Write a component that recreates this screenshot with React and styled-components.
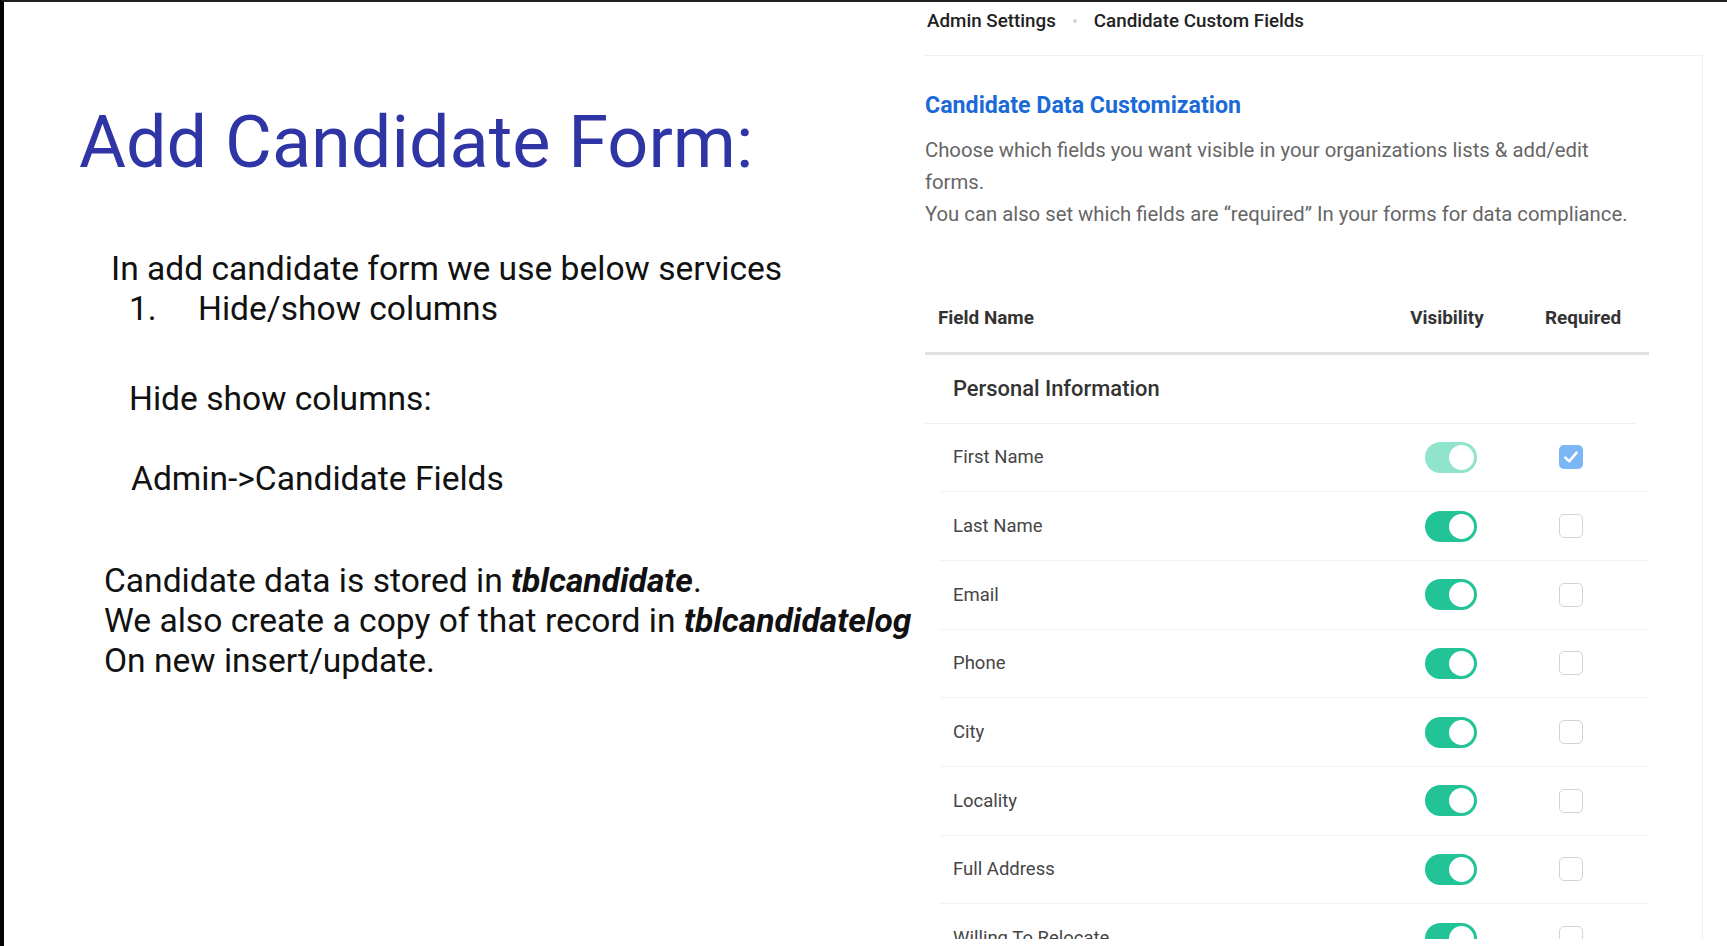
import React from "react";
import styled, { createGlobalStyle } from "styled-components";

const GlobalStyle = createGlobalStyle`
  html, body {
    margin: 0;
    padding: 0;
    background: #fff;
  }
  body {
    font-family: Roboto, "Liberation Sans", sans-serif;
    overflow: hidden;
  }
  * {
    box-sizing: border-box;
  }
`;

const Page = styled.div`
  display: flex;
  width: 1727px;
  height: 946px;
  border-top: 2px solid #1f1f1f;
  border-left: 4px solid #050505;
  background: #fff;
  overflow: hidden;
`;

// left half: the slide text
const Slide = styled.section`
  width: 920px;
  flex-shrink: 0;
  padding-top: 105px;
`;

const Title = styled.h1`
  margin: 0 0 0 75px;
  font-size: 72px;
  font-weight: 400;
  line-height: 1;
  color: #2f35a5;
  white-space: nowrap;
`;

const Line = styled.p`
  margin: ${(p) => p.$top}px 0 0 ${(p) => p.$indent}px;
  font-size: 33.6px;
  line-height: 40px;
  color: #111;
  white-space: nowrap;
`;

const ListItem = styled.div`
  display: flex;
  margin-left: 125px;
  font-size: 33.6px;
  line-height: 40px;
  color: #111;
`;

const Num = styled.span`
  width: 69px;
`;

const Table = styled.b`
  font-weight: 700;
  font-style: italic;
`;

// right half: the app screenshot
const Panel = styled.section`
  flex: 1;
  min-width: 0;
  display: flex;
  flex-direction: column;
  padding-bottom: 7px;
`;

const Breadcrumb = styled.nav`
  display: flex;
  align-items: center;
  gap: 17px;
  padding: 7px 0 0 3px;
  font-size: 18.8px;
  font-weight: 500;
  line-height: 24px;
  color: #222;
`;

const Dot = styled.span`
  width: 4px;
  height: 4px;
  border-radius: 50%;
  background: #d2d2d2;
`;

const Card = styled.div`
  flex: 1;
  width: 779px;
  margin-top: 22px;
  padding: 34.5px 0 0 1px;
  border-top: 1px solid #f1f1f1;
  border-right: 1px solid #f1f1f1;
  overflow: hidden;
`;

const CardTitle = styled.h2`
  margin: 0;
  font-size: 23.2px;
  font-weight: 700;
  line-height: 28px;
  color: #1a6ad8;
`;

const Desc = styled.p`
  max-width: 705px;
  margin: 15.5px 0 0;
  font-size: 20.3px;
  line-height: 32px;
  color: #666;
`;

const Fields = styled.div`
  width: 724px;
  margin-top: 53.5px;
`;

const HeadRow = styled.div`
  display: grid;
  grid-template-columns: 1fr 140px 132px;
  align-items: center;
  height: 71px;
  padding-left: 13px;
  border-bottom: 3px solid #e2e2e2;
  font-size: 18.9px;
  font-weight: 700;
  color: #333;
`;

const HeadCell = styled.span`
  text-align: ${(p) => (p.$center ? "center" : "left")};
`;

const Section = styled.div`
  display: flex;
  align-items: center;
  height: 69px;
  margin-right: 13px;
  padding-left: 28px;
  border-bottom: 1px solid #f0f0f0;
  font-size: 21.9px;
  font-weight: 500;
  color: #333;
`;

const FieldRow = styled.div`
  display: grid;
  grid-template-columns: 1fr 84px 156px;
  align-items: center;
  height: 68.7px;
  margin-left: 14px;
  padding-left: 14px;
  border-bottom: 1px solid #f3f3f3;
  font-size: 18.5px;
  color: #454545;
`;

const Cell = styled.div`
  display: flex;
  justify-content: center;
`;

const Toggle = styled.span`
  display: flex;
  justify-content: flex-end;
  align-items: center;
  width: 52px;
  height: 31px;
  padding: 3px;
  border-radius: 16px;
  background: ${(p) => (p.$dim ? "#8fe4cb" : "#22c497")};
`;

const Knob = styled.span`
  width: 25px;
  height: 25px;
  border-radius: 50%;
  background: #fff;
`;

const Check = styled.span`
  display: flex;
  align-items: center;
  justify-content: center;
  width: 24px;
  height: 24px;
  border-radius: 5px;
  border: ${(p) => (p.$checked ? "none" : "1.5px solid #d3d3d3")};
  background: ${(p) => (p.$checked ? "#7ab7f4" : "#fff")};
`;

const fields = [
  { name: "First Name", dim: true, required: true },
  { name: "Last Name" },
  { name: "Email" },
  { name: "Phone" },
  { name: "City" },
  { name: "Locality" },
  { name: "Full Address" },
  { name: "Willing To Relocate" },
];

export default function App() {
  return (
    <>
      <GlobalStyle />
      <Page>
        <Slide>
          <Title>Add Candidate Form:</Title>
          <Line $top={70} $indent={107}>
            In add candidate form we use below services
          </Line>
          <ListItem>
            <Num>1.</Num>
            <span>Hide/show columns</span>
          </ListItem>
          <Line $top={50} $indent={125}>
            Hide show columns:
          </Line>
          <Line $top={40} $indent={127}>
            Admin-&gt;Candidate Fields
          </Line>
          <Line $top={62} $indent={100}>
            Candidate data is stored in <Table>tblcandidate</Table>.
            <br />
            We also create a copy of that record in <Table>tblcandidatelog</Table>
            <br />
            On new insert/update.
          </Line>
        </Slide>

        <Panel>
          <Breadcrumb>
            <span>Admin Settings</span>
            <Dot />
            <span>Candidate Custom Fields</span>
          </Breadcrumb>
          <Card>
            <CardTitle>Candidate Data Customization</CardTitle>
            <Desc>
              Choose which fields you want visible in your organizations lists &amp; add/edit forms.
              <br />
              You can also set which fields are “required” In your forms for data compliance.
            </Desc>
            <Fields>
              <HeadRow>
                <HeadCell>Field Name</HeadCell>
                <HeadCell $center>Visibility</HeadCell>
                <HeadCell $center>Required</HeadCell>
              </HeadRow>
              <Section>Personal Information</Section>
              {fields.map((f) => (
                <FieldRow key={f.name}>
                  <span>{f.name}</span>
                  <Cell>
                    <Toggle $dim={f.dim}>
                      <Knob />
                    </Toggle>
                  </Cell>
                  <Cell>
                    <Check $checked={f.required}>
                      {f.required && (
                        <svg width="20" height="20" viewBox="0 0 16 16">
                          <polyline
                            points="3.5 8.5 6.5 11.5 12.5 4.5"
                            fill="none"
                            stroke="#fff"
                            strokeWidth="2"
                            strokeLinecap="round"
                            strokeLinejoin="round"
                          />
                        </svg>
                      )}
                    </Check>
                  </Cell>
                </FieldRow>
              ))}
            </Fields>
          </Card>
        </Panel>
      </Page>
    </>
  );
}
